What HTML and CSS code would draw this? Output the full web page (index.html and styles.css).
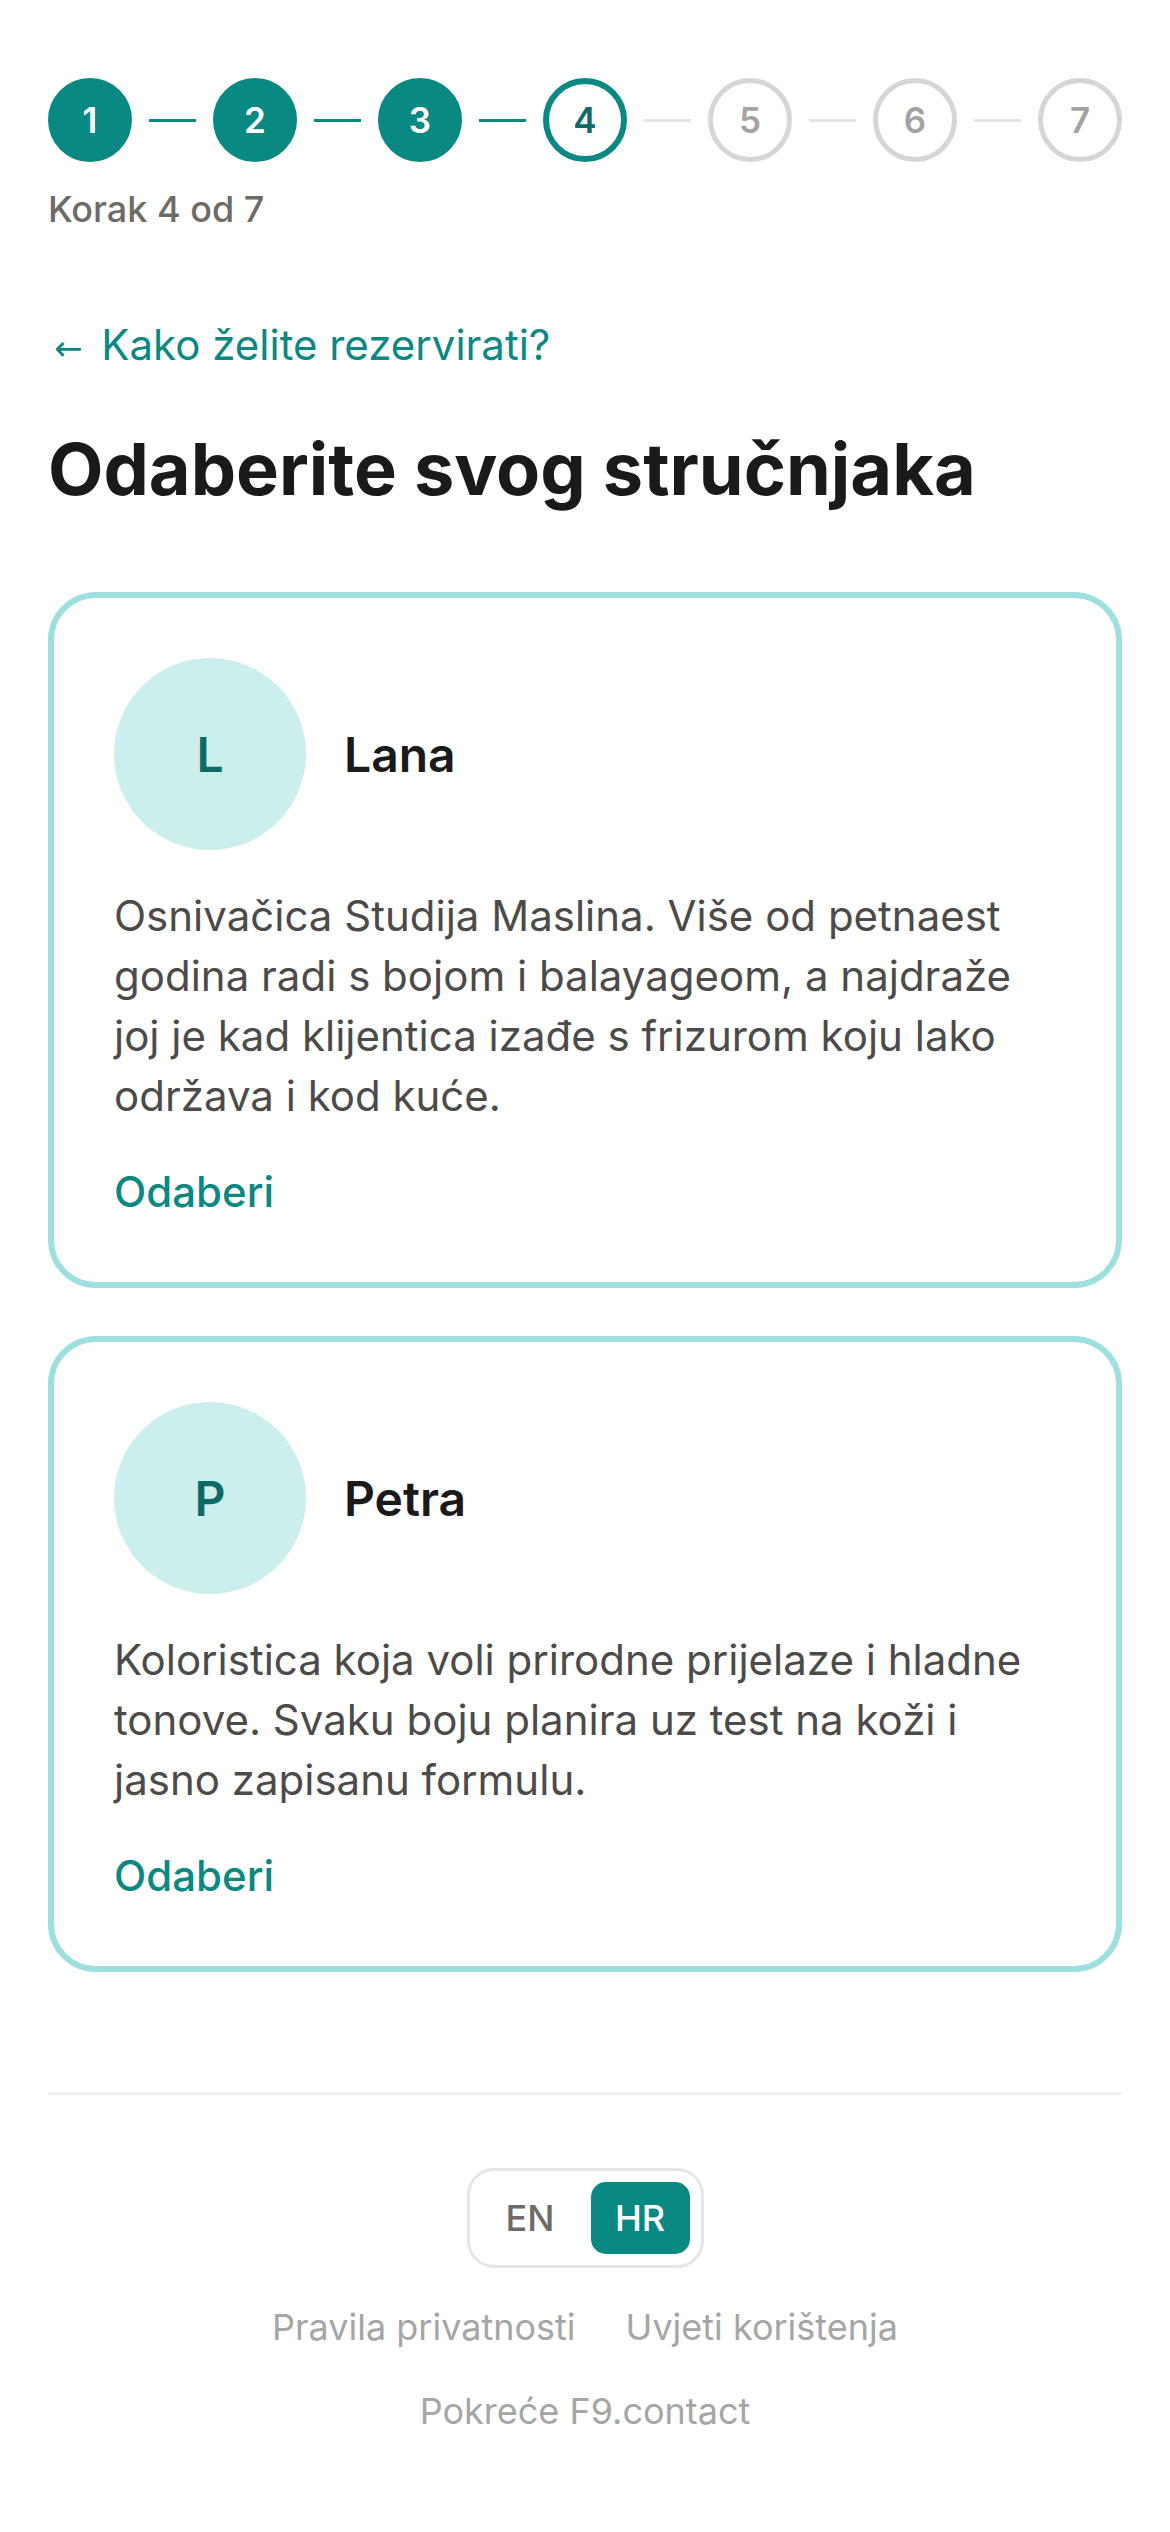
FILE: index.html
```html
<!DOCTYPE html>
<html lang="hr">
<head>
    <meta charset="UTF-8">
    <meta name="viewport" content="width=device-width, initial-scale=1.0">
    <title>Odaberite svog stručnjaka</title>
    <link rel="stylesheet" href="styles.css">
</head>
<body>

<div class="page">
    <!-- Koraci rezervacije -->
    <div class="steps">
        <div class="step done">1</div>
        <div class="line done"></div>
        <div class="step done">2</div>
        <div class="line done"></div>
        <div class="step done">3</div>
        <div class="line done"></div>
        <div class="step current">4</div>
        <div class="line"></div>
        <div class="step">5</div>
        <div class="line"></div>
        <div class="step">6</div>
        <div class="line"></div>
        <div class="step">7</div>
    </div>
    <p class="step-label">Korak 4 od 7</p>

    <a class="back" href="#"><span class="arrow">←</span> Kako želite rezervirati?</a>

    <h1>Odaberite svog stručnjaka</h1>

    <!-- Stručnjaci -->
    <div class="experts">
        <div class="card">
            <div class="card-head">
                <div class="avatar">L</div>
                <div class="name">Lana</div>
            </div>
            <p class="bio">Osnivačica Studija Maslina. Više od petnaest godina radi s bojom i balayageom, a najdraže joj je kad klijentica izađe s frizurom koju lako održava i kod kuće.</p>
            <a class="choose" href="#">Odaberi</a>
        </div>

        <div class="card">
            <div class="card-head">
                <div class="avatar">P</div>
                <div class="name">Petra</div>
            </div>
            <p class="bio">Koloristica koja voli prirodne prijelaze i hladne tonove. Svaku boju planira uz test na koži i jasno zapisanu formulu.</p>
            <a class="choose" href="#">Odaberi</a>
        </div>
    </div>

    <div class="footer">
        <div class="lang">
            <button>EN</button>
            <button class="active">HR</button>
        </div>
        <div class="links">
            <a href="#">Pravila privatnosti</a>
            <a href="#">Uvjeti korištenja</a>
        </div>
        <p class="powered">Pokreće F9.contact</p>
    </div>
</div>

</body>
</html>
```

FILE: styles.css
```css
body {
    font-family: Inter, "Noto Sans", sans-serif;
    background-color: #ffffff;
    color: #1a1a1a;
    margin: 0;
    padding: 0;
}
.page {
    padding: 78px 48px 80px;
}
.steps {
    display: flex;
    align-items: center;
}
.step {
    width: 84px;
    height: 84px;
    border-radius: 50%;
    box-sizing: border-box;
    border: 5px solid #d6d6d6;
    color: #a3a3a3;
    font-size: 35px;
    font-weight: 600;
    display: flex;
    align-items: center;
    justify-content: center;
    flex-shrink: 0;
}
.step.done {
    background-color: #0a8882;
    border-color: #0a8882;
    color: #ffffff;
}
.step.current {
    border: 6px solid #0a8882;
    color: #0d6b65;
}
.line {
    flex: 1;
    height: 3px;
    margin: 0 17px;
    background-color: #e3e3e3;
}
.line.done {
    background-color: #0a8882;
}
.step-label {
    margin: 23px 0 0;
    font-size: 36px;
    line-height: 48px;
    font-weight: 500;
    color: #6e6a66;
}
.back {
    display: block;
    margin-top: 82px;
    font-size: 42px;
    line-height: 60px;
    color: #0a8882;
    text-decoration: none;
}
.back .arrow {
    font-family: "DejaVu Sans", sans-serif;
    font-size: 34px;
    line-height: 1;
    margin-left: 6px;
    margin-right: 7px;
}
h1 {
    margin: 51px 0 0;
    font-size: 72px;
    line-height: 86px;
    font-weight: 700;
    color: #1a1a1a;
}
.experts {
    margin-top: 80px;
    display: flex;
    flex-direction: column;
    gap: 48px;
}
.card {
    border: 6px solid #9ee0df;
    border-radius: 48px;
    padding: 60px;
}
.card-head {
    display: flex;
    align-items: center;
    gap: 38px;
}
.avatar {
    width: 192px;
    height: 192px;
    border-radius: 50%;
    background-color: #ccefed;
    color: #0d6b65;
    font-size: 48px;
    font-weight: 600;
    display: flex;
    align-items: center;
    justify-content: center;
}
.name {
    font-size: 48px;
    font-weight: 600;
    color: #1a1a1a;
}
.bio {
    margin: 36px 0 0;
    font-size: 42px;
    line-height: 60px;
    color: #4d4b49;
}
.choose {
    display: block;
    margin-top: 36px;
    font-size: 42px;
    line-height: 60px;
    font-weight: 500;
    color: #0a8882;
    text-decoration: none;
}
.footer {
    margin-top: 120px;
    border-top: 3px solid #f0f0f0;
    padding-top: 73px;
    text-align: center;
}
.lang {
    display: inline-flex;
    gap: 11px;
    padding: 11px;
    border: 3px solid #e6e6e6;
    border-radius: 27px;
}
.lang button {
    width: 99px;
    height: 72px;
    border: none;
    border-radius: 15px;
    background: none;
    font-family: inherit;
    font-size: 36px;
    font-weight: 500;
    color: #6e6a66;
    cursor: pointer;
}
.lang button.active {
    background-color: #0a8882;
    color: #ffffff;
}
.links {
    display: flex;
    justify-content: center;
    gap: 50px;
    margin-top: 34px;
}
.links a {
    font-size: 36px;
    line-height: 50px;
    color: #a6a6a6;
    text-decoration: none;
}
.powered {
    margin: 34px 0 0;
    font-size: 36px;
    line-height: 50px;
    color: #a6a6a6;
}
```
